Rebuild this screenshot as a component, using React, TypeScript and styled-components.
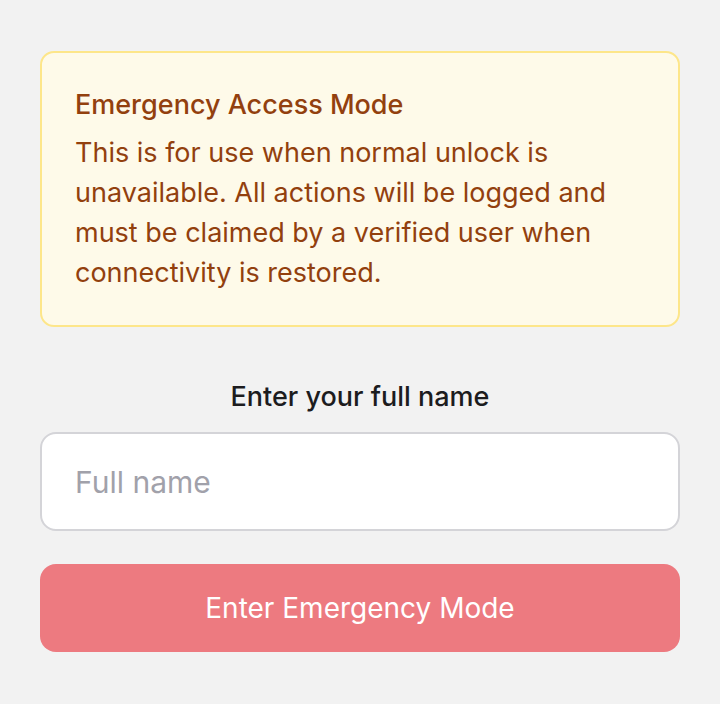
import styled, { createGlobalStyle } from 'styled-components';

const GlobalStyle = createGlobalStyle`
    html, body {
        margin: 0;
        padding: 0;
        background: #f2f2f2;
        font-family: Inter, "Noto Sans", sans-serif;
        -webkit-font-smoothing: antialiased;
    }
`;

const Page = styled.div`
    box-sizing: border-box;
    width: 720px;
    min-height: 704px;
    padding: 51px 40px 40px;
    display: flex;
    flex-direction: column;
`;

const Notice = styled.div`
    box-sizing: border-box;
    background: #fefae9;
    border: 2px solid #fde68a;
    border-radius: 14px;
    padding: 32px 33px 32px;
    color: #92400e;
`;

const NoticeTitle = styled.div`
    font-size: 27px;
    font-weight: 500;
    line-height: 40px;
    margin-bottom: 8px;
`;

const NoticeBody = styled.p`
    margin: 0;
    font-size: 27px;
    line-height: 40px;
`;

const Form = styled.form`
    display: flex;
    flex-direction: column;
    margin-top: 50px;
`;

const Label = styled.label`
    text-align: center;
    font-size: 27px;
    font-weight: 500;
    line-height: 40px;
    color: #1c1c1e;
    margin-bottom: 15px;
`;

const Input = styled.input`
    box-sizing: border-box;
    width: 100%;
    height: 99px;
    border: 2px solid #d4d4d8;
    border-radius: 16px;
    background: #fff;
    padding: 0 33px;
    font-family: inherit;
    font-size: 30px;
    color: #1c1c1e;
    outline: none;
    &::placeholder {
        color: #a1a1aa;
    }
`;

const SubmitButton = styled.button`
    box-sizing: border-box;
    margin-top: 33px;
    height: 88px;
    width: 100%;
    border: none;
    border-radius: 16px;
    background: #ed7a80;
    color: #fff;
    font-family: inherit;
    font-size: 28px;
    font-weight: 400;
    cursor: not-allowed;
`;

export default function App() {
    return (
        <>
            <GlobalStyle />
            <Page>
                <Notice>
                    <NoticeTitle>Emergency Access Mode</NoticeTitle>
                    <NoticeBody>
                        This is for use when normal unlock is unavailable. All actions will be
                        logged and must be claimed by a verified user when connectivity is
                        restored.
                    </NoticeBody>
                </Notice>
                <Form onSubmit={(e) => e.preventDefault()}>
                    <Label htmlFor="full-name">Enter your full name</Label>
                    <Input id="full-name" placeholder="Full name" />
                    <SubmitButton type="submit" disabled>
                        Enter Emergency Mode
                    </SubmitButton>
                </Form>
            </Page>
        </>
    );
}
